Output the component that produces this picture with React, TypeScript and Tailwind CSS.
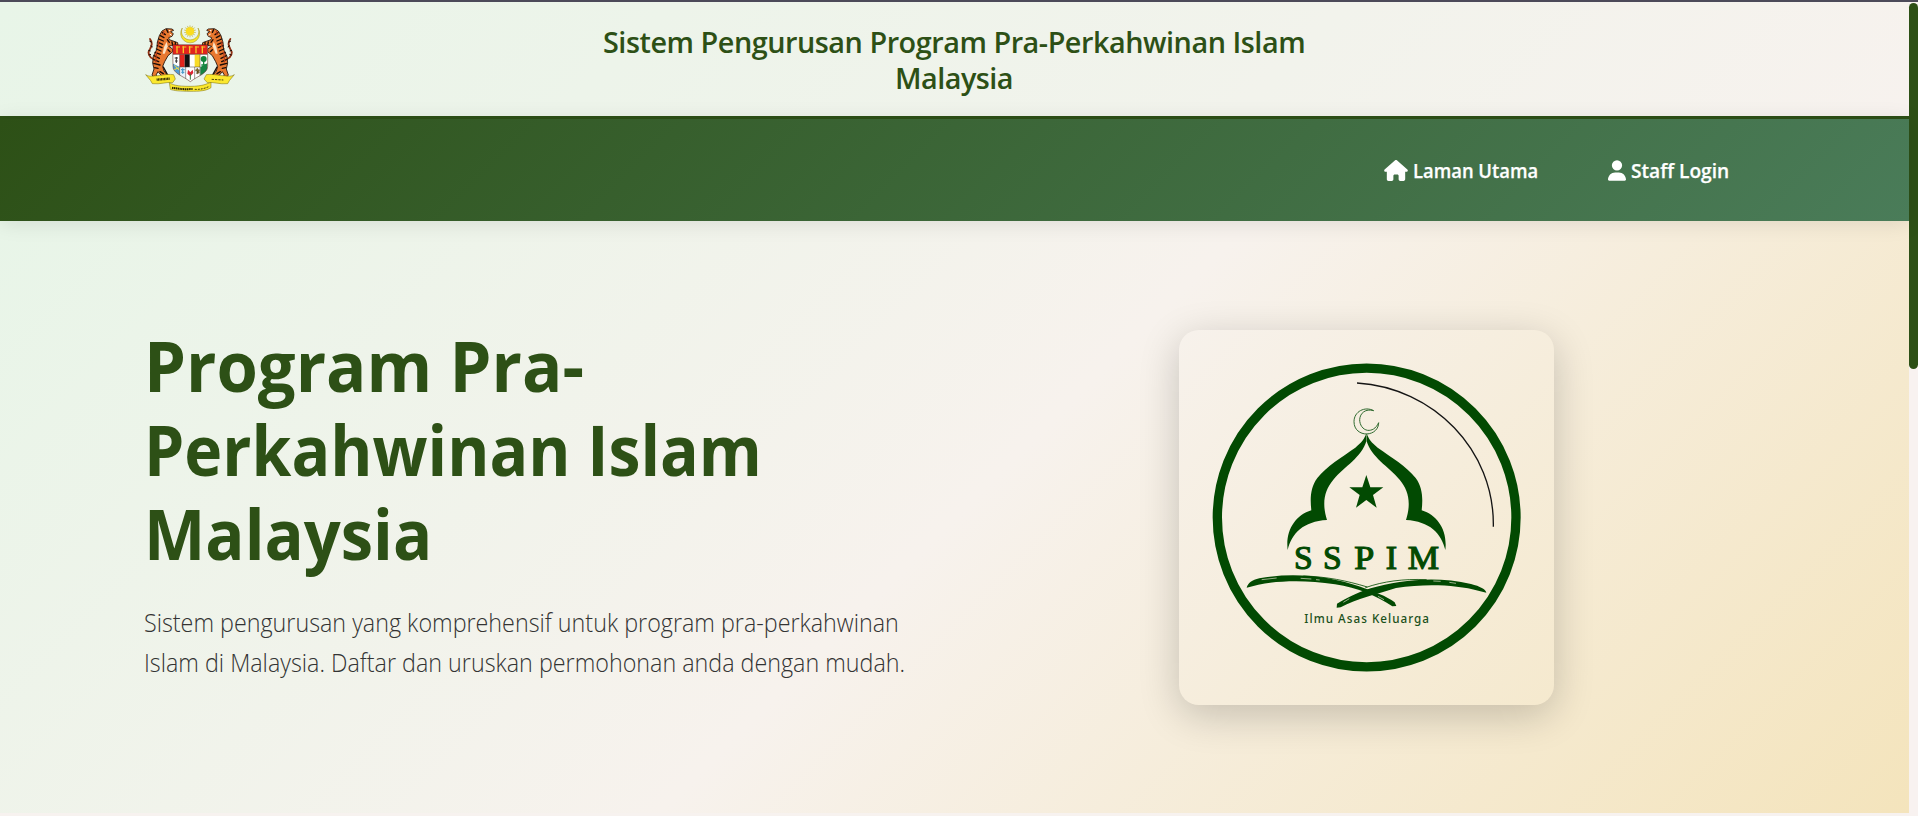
import React from "react";
import { FaHouse, FaUser } from "react-icons/fa6";

function Tiger() {
  return (
    <g>
      <path d="M70 148C56 142 52 128 60 118C66 108 68 98 60 88" fill="none" stroke="#8f2f12" strokeWidth="5.500" strokeLinecap="round" />
      <path d="M58 94L66 98M62 108L68 112M55 122L62 124M56 136L63 134" stroke="#1a0c08" strokeWidth="3" />
      <path
        d="M96 64L108 57L126 58L131 62L122 66L130 72L126 80L116 84L118 90L132 95L143 99L144 106L124 108L116 110L128 118L128 126L114 138L104 156L98 170L102 184L112 196L108 204L96 200L84 186L78 196L84 204L72 204L66 196L72 178L68 160L70 140L80 120L82 98L88 78Z"
        fill="#e8782f"
        stroke="#1d0d06"
        strokeWidth="2.500"
        strokeLinejoin="round"
      />
      <path d="M110 96L113 110L104 132L98 132L102 112Z" fill="#fbe3c4" />
      <path
        d="M97 69L106 75M91 78L102 84M86 88L100 94M84 98L98 104M82 108L96 114M79 118L93 124M75 128L91 134M72 138L88 146M70 149L86 156M71 161L90 166M74 174L84 176M110 60L114 68M112 90L118 98M126 97L128 107M136 98L136 106M114 120L120 126M90 186L100 192"
        stroke="#1a0c08"
        strokeWidth="4"
        strokeLinecap="round"
      />
      <path d="M85 94L86 112M80 126L77 158M102 64L99 76" stroke="#b5391c" strokeWidth="3.500" />
      <path d="M117 63L121 63M119 73L125 77" stroke="#fff" strokeWidth="3" />
      <path d="M100 172L114 198M72 200L84 202M106 200L118 200" stroke="#1a0c08" strokeWidth="4" strokeLinecap="round" />
    </g>
  );
}

function Crest() {
  const rays = Array.from({ length: 14 }, (_, i) => (i * 360) / 14);
  return (
    <svg viewBox="45 40 270 210" className="h-[70px] w-[90px]" aria-hidden="true">
      <path d="M157 55A28.500 28.500 0 1 0 204 55A26 25 0 1 1 157 55Z" fill="#f8e72a" stroke="#9a8b1c" strokeWidth="1.500" />
      {rays.map((r) => (
        <path key={r} d="M177 66L180 47L183 66Z" fill="#f8e32a" stroke="#a8921c" strokeWidth=".7" transform={`rotate(${r} 180 65)`} />
      ))}
      <circle cx="180" cy="65" r="12" fill="#fbdc1e" />
      <Tiger />
      <g transform="translate(361 0) scale(-1 1)">
        <Tiger />
      </g>
      <clipPath id="shield">
        <path d="M128 105H233V170C233 192 204 198 181 216C158 198 129 192 129 170Z" />
      </clipPath>
      <g clipPath="url(#shield)">
        <rect x="125" y="100" width="112" height="120" fill="#fff" />
        <rect x="125" y="100" width="112" height="34" fill="#e3241d" />
        <path d="M141 110V131M160 110V131M179 110V131M198 110V131M217 110V131" stroke="#f5c62a" strokeWidth="4" />
        <path d="M138 112H150M157 112H169M176 112H188M195 112H207M214 112H226" stroke="#f5c62a" strokeWidth="3" />
        <rect x="149" y="134" width="15" height="38" fill="#e3241d" />
        <rect x="164" y="134" width="15" height="38" fill="#111" />
        <rect x="194" y="134" width="16" height="38" fill="#f9dc28" />
        <path d="M139 142V160M134 145L144 145M135 154H143" stroke="#333" strokeWidth="3" />
        <circle cx="221" cy="148" r="9" fill="#13853c" />
        <path d="M221 148V164M214 166H229" stroke="#13853c" strokeWidth="4" />
        <path d="M129 162L150 172V200L129 180Z" fill="#4f9bd4" />
        <path d="M133 166L148 182M132 180L148 174" stroke="#f4dd3d" strokeWidth="3" />
        <rect x="149" y="172" width="18" height="40" fill="#e9f1fa" />
        <path d="M153 180H164M158 176V192M154 188H163" stroke="#4a9ccc" strokeWidth="4" />
        <path d="M174 180L181 188L188 180L190 190L181 200L172 192Z" fill="#e12535" />
        <path d="M181 192V210" stroke="#327a3b" strokeWidth="3" />
        <path d="M201 176L206 188L200 192M196 182H209" stroke="#7a6430" strokeWidth="5" />
        <path d="M211 172L233 160V180L211 202Z" fill="#178543" />
        <path d="M129 134H233M149 134V206M167 172V212M194 172V212M210 134V202M149 172H211" stroke="#443a35" strokeWidth="1.500" />
      </g>
      <path d="M128 105H233V170C233 192 204 198 181 216C158 198 129 192 129 170Z" fill="none" stroke="#4d1710" strokeWidth="1.500" />
      <g fill="#fbe82e" stroke="#75680d" strokeWidth="1.500" strokeLinejoin="round">
        <path d="M47 195C60 203 68 198 84 198C104 195 120 193 131 195L136 208L128 219C108 216 92 225 67 222L62 213Z" />
        <path d="M313 195C300 203 292 198 276 198C256 195 240 193 229 195L222 208L232 219C252 216 268 225 293 222L298 213Z" />
        <path d="M118 219C128 225 139 230 180 230C220 230 230 222 243 218L243 234C228 244 208 245 180 245C150 245 130 243 121 239Z" />
      </g>
      <path d="M80 210L119 207" stroke="#292306" strokeWidth="7" strokeDasharray="3 1.500" />
      <path d="M245 209L280 211" stroke="#4d430b" strokeWidth="3" strokeDasharray="7 3" />
      <path d="M126 234C150 239 170 239 188 238" stroke="#292306" strokeWidth="6" strokeDasharray="4 1.500" fill="none" />
      <path d="M194 239C212 240 226 236 238 230" stroke="#4d430b" strokeWidth="3" strokeDasharray="6 3" fill="none" />
    </svg>
  );
}

function ArchHalf() {
  return (
    <path
      d="M589 340C584 356 574 369 556 383C515 412 470 438 442 474C421 502 420 536 424 571C376 586 346 631 353 690C365 640 400 604 471 600C455 550 463 511 490 479C524 440 575 411 589 364Z"
      fill="#024a02"
    />
  );
}

function SspimLogo() {
  return (
    <svg viewBox="27 30 1125 1125" className="block size-full" role="img" aria-label="SSPIM">
      <circle cx="590" cy="592.500" r="448" fill="none" stroke="#024a02" strokeWidth="28" />
      <path d="M561 189C790 203 974 390 970 620" fill="none" stroke="#151515" strokeWidth="4" />
      <path
        d="M611 272C585 258 552 274 552 305C552 330 571 342 590 342C612 341 626 326 626 308C617 327 605 332 593 331C578 329 569 314 569 299C570 279 587 265 611 272Z"
        fill="none"
        stroke="#2f6a2f"
        strokeWidth="3"
      />
      <ArchHalf />
      <g transform="translate(1179 0) scale(-1 1)">
        <ArchHalf />
      </g>
      <path d="M589 465L601 502H640L609 525L620 563L589 540L558 563L569 525L538 502H577Z" fill="#024a02" />
      <g fill="#024a02" stroke="#024a02" strokeWidth="3.500" fontFamily="'Liberation Serif', serif" fontSize="103" fontWeight="400">
        <text x="372" y="746" textLength="56" lengthAdjust="spacingAndGlyphs">S</text>
        <text x="459" y="746" textLength="56" lengthAdjust="spacingAndGlyphs">S</text>
        <text x="553" y="746" textLength="60" lengthAdjust="spacingAndGlyphs">P</text>
        <text x="647" y="746" textLength="34" lengthAdjust="spacingAndGlyphs">I</text>
        <text x="713" y="746" textLength="94" lengthAdjust="spacingAndGlyphs">M</text>
      </g>
      <path d="M230 803C234 789 246 780 268 775C375 755 484 770 567 799C611 814 650 829 674 847L679 858L667 859C620 829 565 803 495 793C405 779 320 783 265 794Z" fill="#024a02" />
      <path d="M949 818C948 808 930 799 903 792C800 767 690 779 602 805C560 818 527 836 501 851L500 863L512 862C560 835 620 823 678 804C770 790 860 795 925 812Z" fill="#024a02" />
      <path d="M400 768C470 770 530 782 592 801M586 803C640 784 700 776 770 779" fill="none" stroke="#024a02" strokeWidth="2.500" />
      <path d="M392 775L424 777M438 779L449 780M790 783L812 784M838 787L858 790M520 847L538 836M624 829L642 839M275 779L320 774" stroke="#e6e3cd" strokeWidth="2" />
      <text x="403" y="908" fontFamily="'Noto Sans', sans-serif" fontSize="35" fontWeight="500" fill="#1a501a" textLength="374" lengthAdjust="spacing">
        Ilmu Asas Keluarga
      </text>
    </svg>
  );
}

export default function App() {
  return (
    <div className="flex h-[816px] w-full flex-col overflow-hidden bg-[#f7f2ef] font-['Open_Sans','Noto_Sans',sans-serif]">
      <div className="h-[2px] shrink-0 bg-[#4c4a59]" />
      <div className="flex min-h-0 flex-1">
        <div className="flex min-w-0 flex-1 flex-col">
          <header className="flex h-[117px] shrink-0 items-center border-b-[3px] border-[#2d5016] bg-[linear-gradient(135deg,#e8f5e8_0%,#f7f2ee_100%)] pl-[145px]">
            <div className="flex w-[458px] pb-[2px]">
              <Crest />
            </div>
            <h1 className="w-[702px] pt-[2px] text-center text-[28.8px] leading-[36px] font-semibold whitespace-nowrap text-[#2d5016]">
              <span className="tracking-[-0.47px]">Sistem Pengurusan Program Pra-Perkahwinan Islam</span>
              <br />
              <span className="tracking-[-0.5px]">Malaysia</span>
            </h1>
          </header>

          <nav className="relative z-10 flex h-[102px] shrink-0 items-center justify-end gap-[69px] bg-[linear-gradient(135deg,#2d5016_0%,#4a7c59_100%)] pt-[2px] pr-[179px] text-[20px] font-semibold whitespace-nowrap text-white shadow-[0_2px_20px_rgba(0,0,0,0.1)] [-webkit-text-stroke:0.25px_white]">
            <a className="flex items-center gap-[5px]">
              <FaHouse className="mb-px h-[21px] w-[24px]" />
              <span className="w-[126px] origin-left scale-x-[0.92]">Laman Utama</span>
            </a>
            <a className="flex items-center gap-[5px]">
              <FaUser className="mb-px h-[21px] w-[18px]" />
              <span className="w-[99px] origin-left scale-x-[0.957]">Staff Login</span>
            </a>
          </nav>

          <main className="flex h-[592px] shrink-0 items-center bg-[linear-gradient(135deg,#e8f5e8_0%,#f7f2ed_50%,#f4e4bc_100%)] pl-[144px]">
            <section className="flex w-[1035px] flex-col pb-[29px]">
              <h2 className="text-[69.5px] leading-[84px] font-bold whitespace-nowrap text-[#2d5016]">
                <span className="block origin-left scale-x-[0.963]">Program Pra-</span>
                <span className="block origin-left scale-x-[0.925]">Perkahwinan Islam</span>
                <span className="block origin-left scale-x-[0.936]">Malaysia</span>
              </h2>
              <p className="mt-[27px] origin-left scale-x-[0.932] text-[25px] leading-[40px] font-light whitespace-nowrap text-[#333333]">
                Sistem pengurusan yang komprehensif untuk program pra-perkahwinan
                <br />
                Islam di Malaysia. Daftar dan uruskan permohonan anda dengan mudah.
              </p>
            </section>
            <div className="size-[375px] rounded-[20px] shadow-[0_10px_40px_rgba(0,0,0,0.2)]">
              <SspimLogo />
            </div>
          </main>
        </div>
        <aside className="w-[9px] shrink-0 bg-[#f8f2f0] pt-px">
          <div className="h-[366px] rounded-full bg-[#2d5016]" />
        </aside>
      </div>
    </div>
  );
}
